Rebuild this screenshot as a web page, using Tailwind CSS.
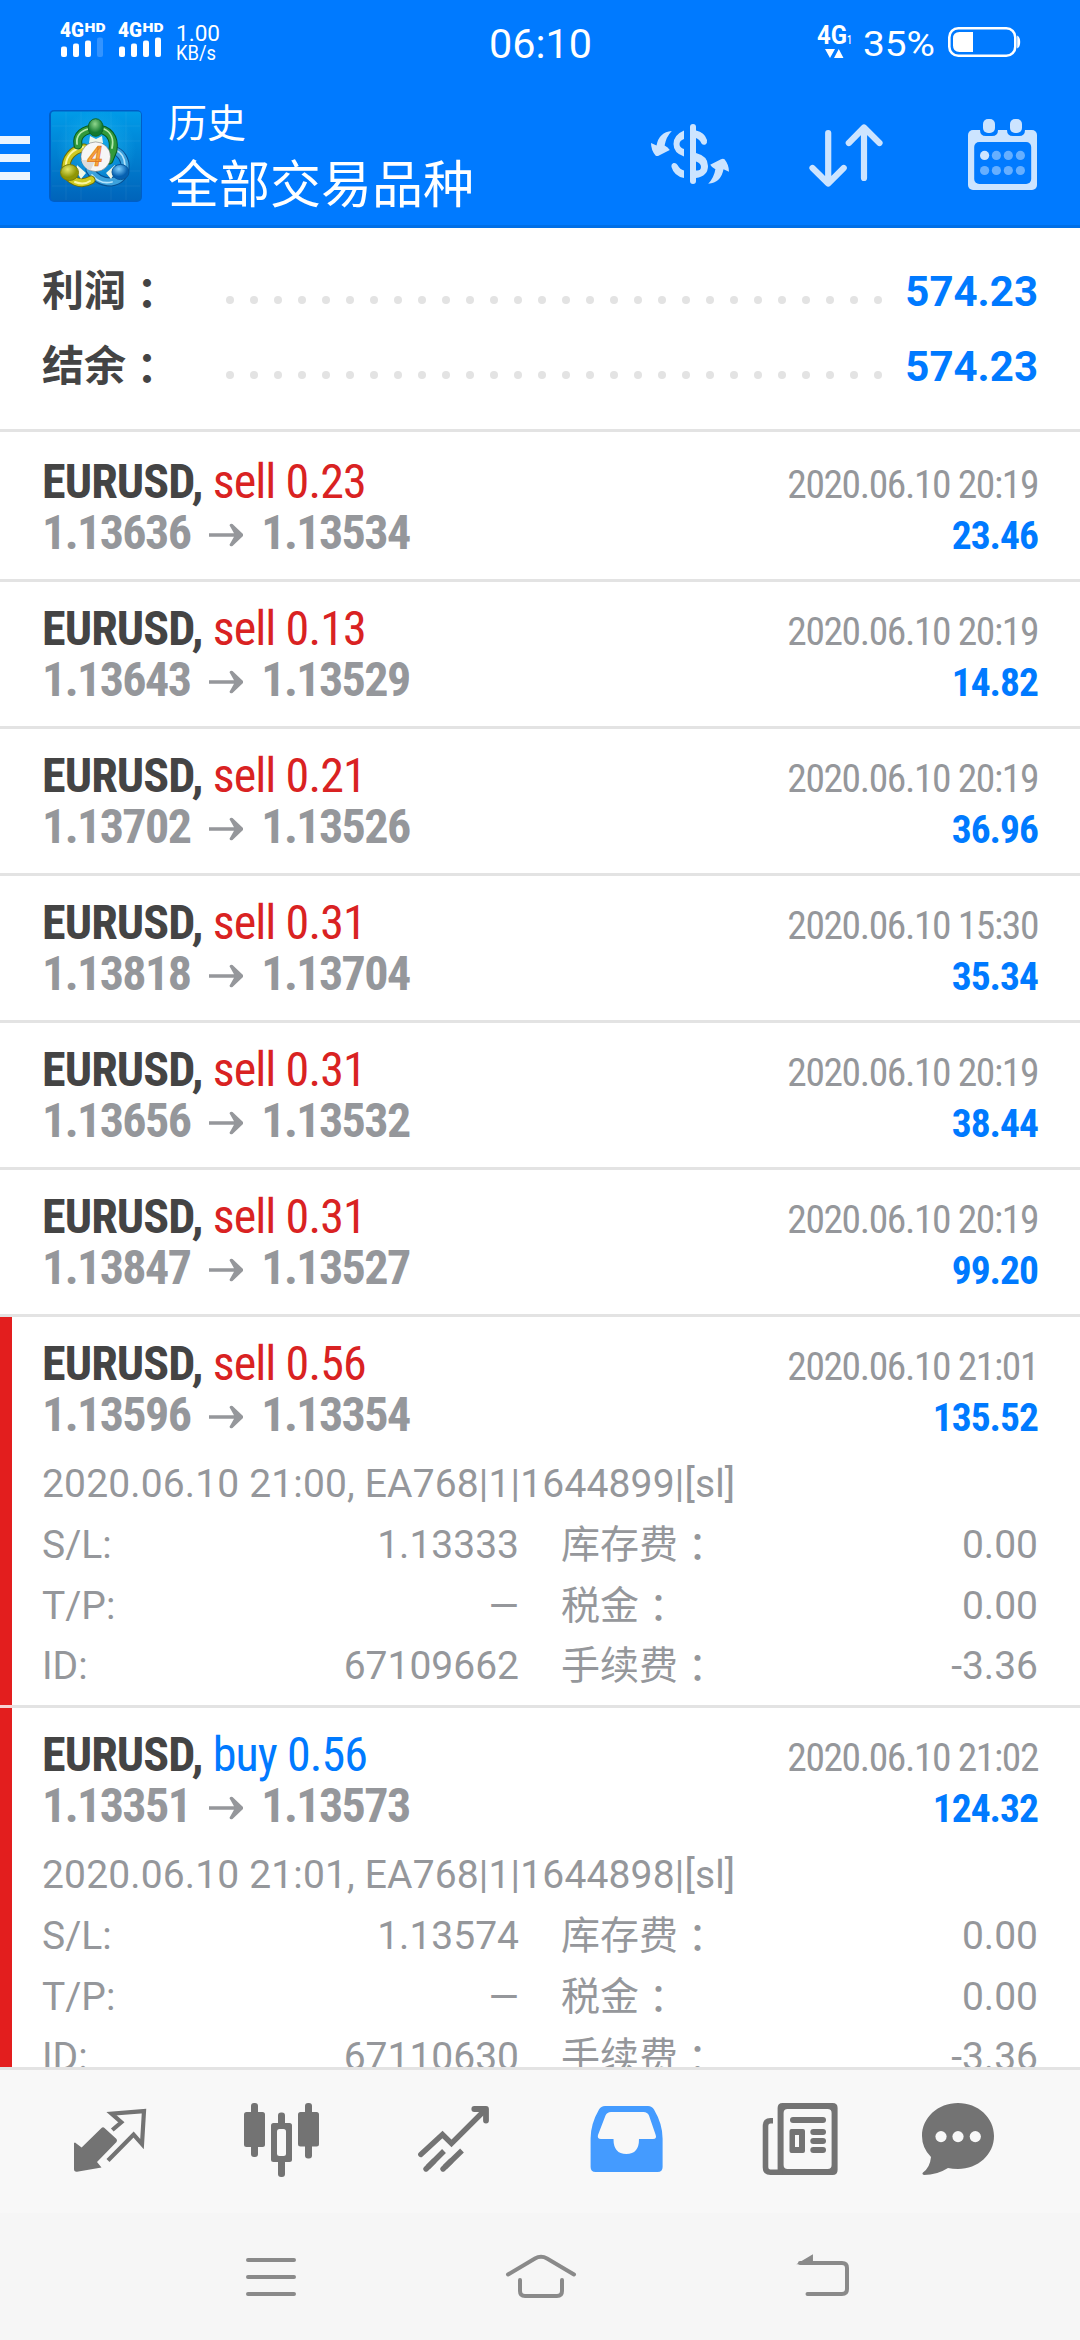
<!DOCTYPE html>
<html lang="zh-CN">
<head>
<meta charset="utf-8">
<title>历史</title>
<script src="https://cdn.jsdelivr.net/npm/@tailwindcss/browser@4"></script>
</head>
<body class="w-[1080px] h-[2340px] overflow-hidden bg-white flex flex-col font-['Roboto','Noto_Sans_CJK_SC',sans-serif]">

<header class="h-[228px] shrink-0 bg-[#007aff] border-b-[3px] border-[#006fe6] text-white flex flex-col">
  <!-- status bar -->
  <div class="h-[84px] flex items-center">
    <svg class="w-[240px] h-[84px]" viewBox="0 0 240 84" fill="#fff">
      <g id="sim">
        <text x="60" y="37" font-size="20" font-weight="900" textLength="24" lengthAdjust="spacingAndGlyphs">4G</text>
        <text x="84.500" y="32" font-size="13" font-weight="900" textLength="21" lengthAdjust="spacingAndGlyphs">HD</text>
        <rect x="61" y="46.500" width="6" height="10.500" rx="2"/>
        <rect x="73" y="43.500" width="6" height="13.500" rx="2"/>
        <rect x="85" y="40.500" width="6" height="16.500" rx="2"/>
      </g>
      <use href="#sim" x="58"/>
      <rect x="97" y="37.500" width="6" height="19.500" rx="2" fill-opacity=".2"/>
      <rect x="155" y="37.500" width="6" height="19.500" rx="2"/>
      <text x="176" y="41" font-size="22" textLength="44" lengthAdjust="spacingAndGlyphs">1.00</text>
      <text x="176" y="60" font-size="19.500" textLength="40" lengthAdjust="spacingAndGlyphs">KB/s</text>
    </svg>
    <svg class="w-[120px] h-[84px] ml-[240px]" viewBox="480 0 120 84" fill="#fff">
      <text x="489" y="58" font-size="40.500" textLength="103" lengthAdjust="spacingAndGlyphs">06:10</text>
    </svg>
    <svg class="w-[270px] h-[84px] ml-[210px]" viewBox="810 0 270 84" fill="#fff">
      <text x="817" y="44" font-size="25" font-weight="700" textLength="30" lengthAdjust="spacingAndGlyphs">4G</text>
      <text x="847" y="44" font-size="13" font-weight="500" textLength="5" lengthAdjust="spacingAndGlyphs">1</text>
      <path d="M825 49h10l-5 9zM834 58h9.500l-4.750-9z"/>
      <text x="863" y="55.500" font-size="35.500" textLength="72" lengthAdjust="spacingAndGlyphs">35%</text>
      <rect x="949.300" y="28.300" width="66" height="27.400" rx="9" fill="none" stroke="#fff" stroke-width="2.600"/>
      <path d="M973 32v20h-13.500q-6.500 0-6.500-6.500v-7q0-6.500 6.500-6.500zM1017.200 35.500q3 1.500 3 6.500t-3 6.500z"/>
    </svg>
  </div>
  <!-- app bar -->
  <div class="flex-1 flex">
    <div class="w-[30px] pt-[52px] flex flex-col gap-[10px]">
      <div class="h-2 bg-[#ebf5ff]"></div><div class="h-2 bg-[#ebf5ff]"></div><div class="h-2 bg-[#ebf5ff]"></div>
    </div>
    <svg class="w-[100px] h-[100px] ml-4 mt-[22px]" viewBox="46 106 100 100">
      <defs>
        <linearGradient id="bg" x1="0" y1="0" x2="0" y2="1"><stop offset="0" stop-color="#009be8"/><stop offset="1" stop-color="#0064ba"/></linearGradient>
        <radialGradient id="glow"><stop offset="0" stop-color="#27c3f5" stop-opacity=".65"/><stop offset="1" stop-color="#27c3f5" stop-opacity="0"/></radialGradient>
        <radialGradient id="gr" cx=".45" cy=".3"><stop offset="0" stop-color="#8fd68c"/><stop offset="1" stop-color="#127a30"/></radialGradient>
        <radialGradient id="ye" cx=".4" cy=".3"><stop offset="0" stop-color="#e6e86a"/><stop offset="1" stop-color="#8f9606"/></radialGradient>
        <radialGradient id="bl" cx=".4" cy=".3"><stop offset="0" stop-color="#7fd0ff"/><stop offset="1" stop-color="#0560b0"/></radialGradient>
      </defs>
      <rect x="49" y="110" width="93" height="92" rx="5" fill="#0053ae" fill-opacity=".7"/>
      <rect x="51" y="111.500" width="90" height="89" rx="3" fill="url(#bg)"/>
      <path d="M66 112v88M81 112v88M111 112v88M126 112v88M52 126h88M52 141h88M52 171h88M52 186h88" stroke="#fff" stroke-opacity=".06"/>
      <circle cx="96" cy="150" r="40" fill="url(#glow)"/>
      <g fill="none" stroke-linecap="round">
        <path d="M90 170C95 178 102 182 111 182C119 181 124 176 125 169C126 160 121 152 113 150" stroke="#064f91" stroke-width="9"/>
        <path d="M90 170C95 178 102 182 111 182C119 181 124 176 125 169C126 160 121 152 113 150" stroke="#3da2dc" stroke-width="7"/>
        <path d="M92 175C97 181 104 184 112 182M115 150C121 152 125 158 125 166" stroke="#b4e4fb" stroke-width="1.800"/>
        <path d="M84 148C73 149 65 158 66 170C68 181 81 186 91 180" stroke="#6b6c05" stroke-width="9"/>
        <path d="M84 148C73 149 65 158 66 170C68 181 81 186 91 180" stroke="#cfca20" stroke-width="7"/>
        <path d="M83 147C73 149 66 156 66 165M75 182C80 184 86 184 90 181" stroke="#fbf6a0" stroke-width="2"/>
        <path d="M78 145C76 135 84 129 96 129S115 137 113 150L109 160" stroke="#075c20" stroke-width="9"/>
        <path d="M78 145C76 135 84 129 96 129S115 137 113 150L109 160" stroke="#329a3c" stroke-width="7"/>
        <path d="M77 144C76 136 81 131 88 129M104 129C111 132 114 139 112 148" stroke="#b2e8ac" stroke-width="1.800"/>
      </g>
      <path d="M90 136l6 3 6-3 1 7H89zM77 165l-1 6 5 8 5-6zM115 165l1 6-5 8-5-6z" fill="#eef6e8"/>
      <ellipse cx="95.700" cy="127.500" rx="7.500" ry="8.800" fill="url(#gr)" stroke="#0d6628"/>
      <ellipse cx="69.500" cy="172.500" rx="9" ry="8" fill="url(#ye)" stroke="#7b7d08"/>
      <ellipse cx="120.500" cy="172" rx="8.500" ry="7.600" fill="url(#bl)" stroke="#06569c"/>
      <circle cx="95.700" cy="156.700" r="14.800" fill="#f6f6f6" stroke="#444" stroke-opacity=".5" stroke-width=".8"/>
      <path d="M81.500 160h14l-5 10.500a14.500 14.500 0 0 1-9-10.500z" fill="#dcdcdc"/>
      <text x="87.500" y="166" font-size="27" font-style="italic" font-weight="500" fill="#f9a63a" stroke="#e0761a" stroke-width=".7">4</text>
    </svg>
    <div class="ml-[22px] flex flex-col">
      <div class="mt-[10px] h-[60px] leading-[60px] text-[39px]">历史</div>
      <div class="mt-[-1px] h-[66px] leading-[66px] text-[51px]">全部交易品种</div>
    </div>
    <svg class="w-[90px] h-[72px] ml-auto mt-[34px]" viewBox="645 118 90 72" fill="#cce4ff">
      <rect x="690" y="124" width="6" height="60" rx="3"/>
      <path id="arr" d="M671.800 131Q659 132 656.500 145.500L651 143Q651 150 655.500 155.500Q657 156.500 659 155.500L669.800 150Q668 147 664.600 145.500Q666 137 671.800 131z"/>
      <use href="#arr" transform="rotate(180 690 157.400)"/>
      <path d="M684 130.500V139Q679.500 140.500 679.500 144T684 149V156.500Q673.500 153 673.500 144T684 130.500zM684 178V170.500Q680 169.500 677.500 165Q676 162.500 673.500 163Q671 164 671.500 167Q674 176 684 178zM696 130.500V138Q700 139.500 701.500 143.500Q703 145.500 705.500 144.500Q707.500 143 707 140Q704.500 132 696 130.500zM696 153V161.500Q701 163 701 167T696 170.500V178Q708 176 708 166T696 153z"/>
    </svg>
    <svg class="w-[80px] h-[72px] ml-[69px] mt-[34px]" viewBox="804 118 80 72" fill="none" stroke="#cce4ff" stroke-width="6.200" stroke-linecap="round" stroke-linejoin="round">
      <path d="M828.200 133v50M812.500 168l15.700 15.500L843.700 168M864 178v-50M848.800 143L864 127.500 879.500 143"/>
    </svg>
    <svg class="w-[76px] h-[80px] ml-[80px] mr-[40px] mt-[31px]" viewBox="964 115 76 80" fill="#cce4ff">
      <rect x="968" y="130" width="69" height="60" rx="5"/>
      <rect x="974.200" y="142" width="57" height="42" rx="5" fill="#007aff"/>
      <path d="M980 128h18v2q0 6-6 6h-6q-6 0-6-6zM1007 128h18v2q0 6-6 6h-6q-6 0-6-6z" fill="#007aff"/>
      <rect x="983" y="119" width="12" height="14" rx="5"/><rect x="1010" y="119" width="12" height="14" rx="5"/>
      <circle cx="984.600" cy="155.400" r="4.600"/>
      <g fill="#66afff"><circle cx="996.400" cy="155.400" r="4.600"/><circle cx="1008.300" cy="155.400" r="4.600"/><circle cx="1020.400" cy="155.400" r="4.600"/><circle cx="984.600" cy="170.500" r="4.600"/><circle cx="996.400" cy="170.500" r="4.600"/><circle cx="1008.300" cy="170.500" r="4.600"/><circle cx="1020.400" cy="170.500" r="4.600"/></g>
    </svg>
  </div>
</header>

<main id="list" class="h-[1839px] shrink-0 overflow-hidden bg-white"></main>

<nav class="h-[146px] shrink-0 border-t-[3px] border-[#e3e3e3] bg-[#f8f8f8] flex">
  <svg class="w-[1080px] h-[143px]" viewBox="0 2070 1080 143" fill="#737373">
    <!-- quotes -->
    <path d="M75 2142.500L81.600 2147.500 101.500 2128Q103 2126.500 104.500 2128L116.500 2139Q117.500 2140.500 116.500 2142L97 2162 101.500 2167.500 77 2171.700Q74 2172 74 2169V2143z"/>
    <path d="M112.300 2130l9-7.700-9.800-8.700 32.500-2.500-2 33-8.400-9.500-25.600 25.900" fill="none" stroke="#737373" stroke-width="4.200" stroke-linejoin="miter"/>
    <!-- charts -->
    <rect x="251" y="2103" width="7" height="54" rx="3"/><rect x="244" y="2112" width="21" height="35" rx="2.500"/>
    <rect x="278" y="2112.500" width="7" height="64.500" rx="3"/><rect x="271" y="2123" width="21" height="39" rx="2.500"/><rect x="277" y="2129" width="9" height="27" rx="2.500" fill="#f8f8f8"/>
    <rect x="305" y="2103" width="7" height="55.500" rx="3"/><rect x="298" y="2112" width="21" height="34.500" rx="2.500"/>
    <!-- trade -->
    <g fill="none" stroke="#737373" stroke-width="5.400" stroke-linecap="round"><path d="M420.800 2154.500L442.500 2134.500 451.500 2143.500 485 2110"/><path d="M474.300 2109H486v11.500" stroke-width="5.800" stroke-linejoin="round"/><path d="M426 2169l8-8M443 2169l8-8"/><path d="M428 2167l16-16M445 2167l17-16.500" stroke-linecap="butt"/></g>
    <!-- history -->
    <path fill="#449bff" fill-rule="evenodd" d="M605 2106h43q4 0 6 3.500 8.600 14.500 8.600 29v28.500q0 5-5 5h-62q-5 0-5-5V2138.500q0-14.500 8.400-29Q601 2106 605 2106zM611 2112q-4 0-5.500 3.500l-7.500 19.500q-1 4 3 4h12.500q0 15 12.800 15t12.700-15h14q4 0 2.700-4l-6.700-19.500q-1.500-3.500-5.500-3.500z"/>
    <!-- news -->
    <path fill-rule="evenodd" d="M782.600 2103h50q5 0 5 5v62q0 5-5 5h-50q-5 0-5-5v-62q0-5 5-5zm5 6q-4 0-4 4v52q0 4 4 4h40q4 0 4-4v-52q0-4-4-4z"/>
    <path d="M773 2120.800h-2.500q-5 0-5 5v41.400q0 5 5 5h12" fill="none" stroke="#737373" stroke-width="5.600"/>
    <rect x="790" y="2117" width="36" height="6" rx="3"/><path fill-rule="evenodd" d="M791.500 2129h11.500q2 0 2 2v20q0 2-2 2h-11.500q-2 0-2-2v-20q0-2 2-2zm3.500 6v12h4v-12z"/>
    <rect x="810.300" y="2129" width="15.700" height="6" rx="3"/><rect x="810.300" y="2138" width="15.700" height="6" rx="3"/><rect x="810.300" y="2147" width="15.700" height="6" rx="3"/>
    <!-- messages -->
    <path d="M958 2103c20 0 36 14.500 36 33s-16 33-36 33q-5.500 0-10-1-11 7-24 7-2.500-1-1-2.500 7-5 8-15.500-9-9-9-21c0-18.500 16-33 36-33z"/>
    <g fill="#f8f8f8"><circle cx="941" cy="2136.600" r="5.600"/><circle cx="958" cy="2136.600" r="5.600"/><circle cx="975.300" cy="2136.600" r="5.600"/></g>
  </svg>
</nav>
<footer class="h-[127px] shrink-0 bg-[#f6f6f6] flex">
  <svg class="w-[1080px] h-[127px]" viewBox="0 2213 1080 127" fill="none" stroke="#8a8a8a" stroke-width="4" stroke-linecap="round">
    <path d="M248 2260h46M248 2277h46M248 2294h46"/>
    <path d="M508 2274.500l27-16q6-3.500 12 0l27 16M520 2280v11q0 5 5 5h32q5 0 5-5v-11"/>
    <path d="M800 2263h42q5 0 5 5v21q0 5-5 5h-34.500"/><path d="M799 2263.500l13.200-8v8z" fill="#8a8a8a" stroke-width="1.500"/>
  </svg>
</footer>

<script>
const deals = [
  ['sell','0.23','1.13636','1.13534','2020.06.10 20:19','23.46'],
  ['sell','0.13','1.13643','1.13529','2020.06.10 20:19','14.82'],
  ['sell','0.21','1.13702','1.13526','2020.06.10 20:19','36.96'],
  ['sell','0.31','1.13818','1.13704','2020.06.10 15:30','35.34'],
  ['sell','0.31','1.13656','1.13532','2020.06.10 20:19','38.44'],
  ['sell','0.31','1.13847','1.13527','2020.06.10 20:19','99.20'],
  ['sell','0.56','1.13596','1.13354','2020.06.10 21:01','135.52',{c:'2020.06.10 21:00, EA768|1|1644899|[sl]',sl:'1.13333',id:'67109662'}],
  ['buy','0.56','1.13351','1.13573','2020.06.10 21:02','124.32',{c:'2020.06.10 21:01, EA768|1|1644898|[sl]',sl:'1.13574',id:'67110630'}],
];
// full-width colon, centred in its cell
const colon = t => t + `<span lang="zh-TW" class="relative top-[3px] leading-none font-['Noto_Sans_CJK_TC',sans-serif]">：</span>`;
const sum = t => `<div class="h-[75px] flex items-center">
  <div class="w-[184px] text-[42px] leading-[75px] font-bold text-[#444]">${colon(t)}</div>
  <div class="flex gap-4 pt-[17px]">${'<i class="size-2 rounded-full bg-[#e3e3e3]"></i>'.repeat(28)}</div>
  <div class="ml-auto text-[42px] font-bold text-[#007aff]">574.23</div></div>`;
const line = (a,b,c,d) => `<div class="h-[60.7px] leading-[60.7px] flex"><span>${a}</span><span class="ml-auto w-[300px] text-right">${b}</span><span class="w-[42px]"></span><span class="w-[240px]">${colon(c)}</span><span class="w-[237px] text-right">${d}</span></div>`;
const extra = e => `<div class="mt-[14px] text-[39px] text-[#95979b]">
  <div class="h-[61px] leading-[61px] tracking-[0.15px]">${e.c}</div>
  ${line('S/L:',e.sl,'库存费','0.00')}${line('T/P:','—','税金','0.00')}${line('ID:',e.id,'手续费','-3.36')}</div>`;
const deal = ([k,v,a,b,d,p,e]) => `<section class="relative pl-[42px] pr-[42px] pt-[21px] border-b-[3px] border-[#e3e3e3] ${e?'h-[391px]':'h-[147px]'}">
  ${e?'<div class="absolute left-0 top-0 w-3 h-[388px] bg-[#e31e1e]"></div><div class="absolute left-0 top-[388px] w-3 h-[3px] bg-[#f7d3d3]"></div>':''}
  <div class="flex justify-between items-baseline h-[51px] leading-[51px] font-stretch-condensed">
    <div class="text-[48px] tracking-[-0.9px]"><b class="font-bold text-[#444]">EURUSD,</b> <span class="${k=='buy'?'text-[#007aff]':'text-[#d92222]'}">${k} ${v}</span></div>
    <div class="text-[39.5px] text-[#95979b] tracking-[-1.4px]">${d}</div></div>
  <div class="flex justify-between items-baseline h-[51px] leading-[51px] font-stretch-condensed font-bold">
    <div class="text-[48px] text-[#95979b] flex items-center tracking-[-1.6px]"><span>${a}</span><svg class="w-[34px] h-[24px] ml-[19px] mr-[18px] mt-1" viewBox="0 0 34 24" fill="#95979b"><path d="M0 10.200h25l-4.500-8Q21 0 23.500 1L34 11v2L23.500 23Q21 24 20.500 21.800l4.500-8H0z"/></svg><span>${b}</span></div>
    <div class="text-[39.5px] text-[#007aff] tracking-[-1px]">${p}</div></div>
  ${e?extra(e):''}</section>`;
document.getElementById('list').innerHTML =
  `<div class="h-[204px] mb-[3px] px-[42px] pt-[26px] border-b-[3px] border-[#e3e3e3]">${sum('利润')}${sum('结余')}</div>` + deals.map(deal).join('');
</script>
</body>
</html>
